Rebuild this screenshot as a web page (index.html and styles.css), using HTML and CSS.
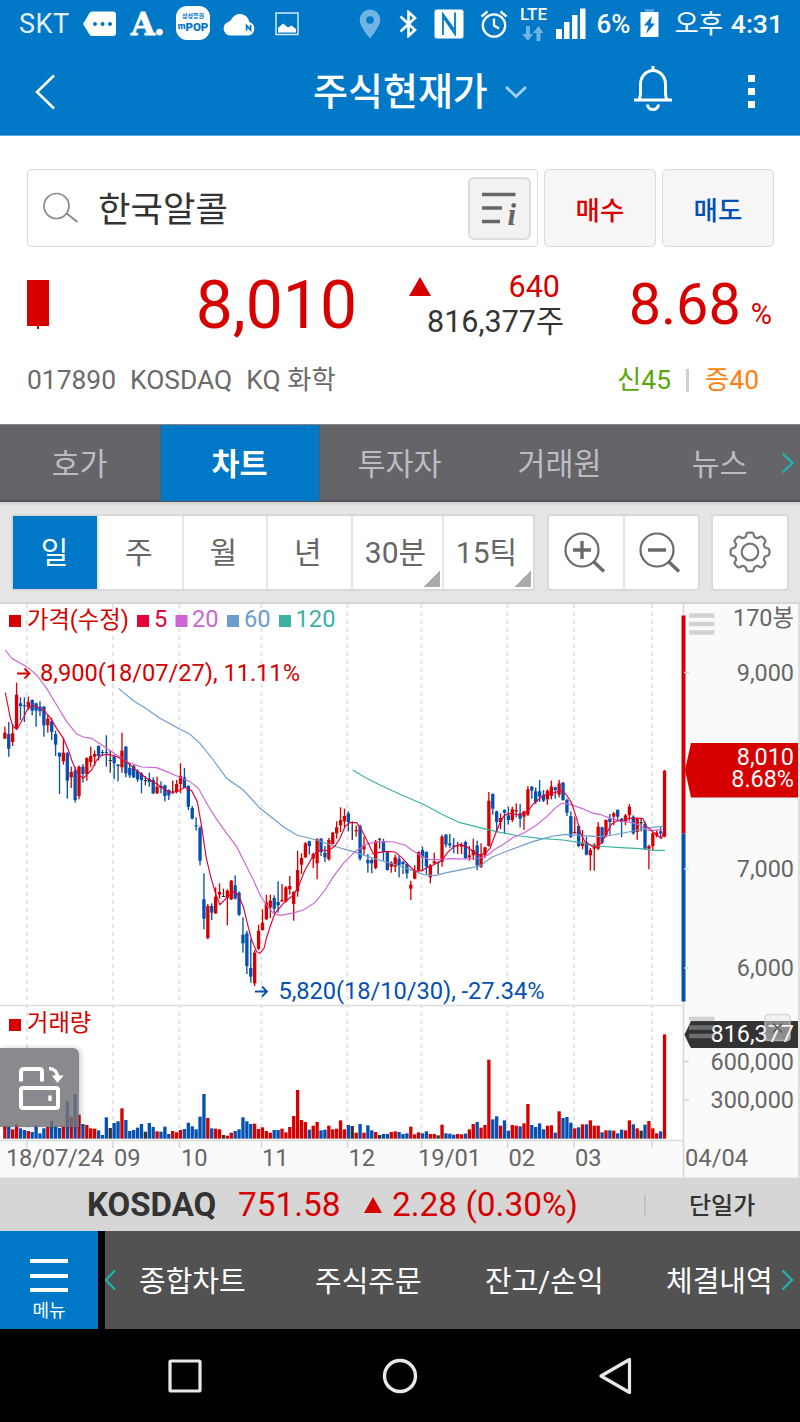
FILE: index.html
```html
<!DOCTYPE html>
<html lang="ko">
<head>
    <meta charset="UTF-8">
    <meta name="viewport" content="width=device-width, initial-scale=1.0">
    <title>주식현재가</title>
    <link rel="stylesheet" href="styles.css">
</head>
<body>
    <!-- 상태바 -->
    <div class="status-bar">
        <div class="status-left">
            <span class="carrier">SKT</span>
            <svg class="ic-msg" width="34" height="26" viewBox="0 0 34 26"><path d="M9 .5H30a3 3 0 0 1 3 3V22a3 3 0 0 1-3 3H9Q7.500 25 6.500 23.500L0 13 6.500 2Q7.500.5 9 .5Z" fill="#fff"/><circle cx="12" cy="13" r="2" fill="#0078c8"/><circle cx="19.500" cy="13" r="2" fill="#0078c8"/><circle cx="27" cy="13" r="2" fill="#0078c8"/></svg>
            <span class="logo-a">A.</span>
            <div class="mpop"><small>삼성증권</small><b><i>m</i>POP</b></div>
            <svg class="ic-cloud" width="34" height="24" viewBox="0 0 34 24"><path d="M7 23.500a7 7 0 0 1-1-13.800 2.500 2.500 0 0 1 2-1.500A9.500 9.500 0 0 1 26.300 10 7 7 0 0 1 26 23.500Z" fill="#fff"/><path d="M23.600 18.500V13.500L27.600 18V13" fill="none" stroke="#0078c8" stroke-width="1.700"/></svg>
            <svg class="ic-pic" width="24" height="24" viewBox="0 0 24 24"><rect x="1" y="1" width="22" height="21.500" fill="none" stroke="#d5e9f7" stroke-width="1.500"/><path d="M3 20.500V16l5-4.500 5 4 3.500-2 4.500 3.500v3.500Z" fill="#fff"/></svg>
        </div>
        <div class="status-right">
            <svg class="ic-pin" width="22" height="30" viewBox="0 0 22 30"><path fill-rule="evenodd" d="M11 .5A10.300 10.300 0 0 0 .7 10.800C.7 18 11 29.500 11 29.500S21.300 18 21.300 10.800A10.300 10.300 0 0 0 11 .5Zm0 6.700a3.800 3.800 0 1 1 0 7.600 3.800 3.800 0 0 1 0-7.600Z" fill="#6fb4e3"/></svg>
            <svg class="ic-bt" width="18" height="28" viewBox="0 0 18 28"><path d="M1.500 6.500 16 20 9.500 26V2L16 8 1.500 21.500" fill="none" stroke="#fff" stroke-width="2.600"/></svg>
            <svg class="ic-nfc" width="30" height="30" viewBox="0 0 30 30"><rect x=".5" y=".5" width="29" height="29" rx="2.500" fill="#fff"/><path d="M9 26V5L20 20.500M21 3.500V25L10 9" fill="none" stroke="#0078c8" stroke-width="1.800"/></svg>
            <svg class="ic-alarm" width="28" height="28" viewBox="0 0 28 28" fill="none" stroke="#fff" stroke-width="2.300"><circle cx="14" cy="15.500" r="11.200"/><path d="M14 8.500V15.500L19 18.500M1.500 6.500 7.500 1.500M26.500 6.500 20.500 1.500"/></svg>
            <div class="lte"><span>LTE</span>
                <svg width="22" height="15" viewBox="0 0 22 15" fill="#6fb4e3"><path d="M4 0H8V8H11L6 15 0 8H4ZM14.500 15H18.500V7H21.500L16.500 0 11 7H14.500Z"/></svg>
            </div>
            <svg class="ic-signal" width="30" height="32" viewBox="0 0 30 32" fill="#fff"><path d="M0 21H6V31H0ZM8 14H13.500V31H8ZM16 7H21.500V31H16ZM24 .5H29.500V31H24Z"/></svg>
            <span class="battery-text">6%</span>
            <svg class="ic-battery" width="19" height="29" viewBox="0 0 19 29"><path d="M5 0H14V3H5Z" fill="#4da1dc"/><path d="M.5 3H18.500V28H.5Z" fill="#fff"/><path d="M12 7 4 16.500H8.500L6 25 15 14.500H10.500Z" fill="#0078c8"/></svg>
            <span class="clock"><span class="thin">오후</span> 4:31</span>
        </div>
    </div>

    <!-- 타이틀 -->
    <div class="header">
        <svg class="back" width="22" height="36" viewBox="0 0 22 36"><path d="M20 1.500 3 18 20 34.500" fill="none" stroke="#fff" stroke-width="2.600"/></svg>
        <div class="title">
            <h1>주식현재가</h1>
            <svg width="22" height="14" viewBox="0 0 22 14"><path d="M1 2 11 11.500 21 2" fill="none" stroke="#a5d0ed" stroke-width="2.800"/></svg>
        </div>
        <svg class="bell" width="40" height="46" viewBox="0 0 40 46" fill="none" stroke="#fff" stroke-width="3"><path d="M20 0V4M1 34H39M6 34Q7.500 31 7.500 27V18.500A12.500 14 0 0 1 32.500 18.500V27Q32.500 31 34 34"/><path d="M14.500 38.500A5.500 5 0 0 0 25.500 38.500"/></svg>
        <div class="more"><i></i><i></i><i></i></div>
    </div>

    <!-- 종목 정보 -->
    <div class="stock">
        <div class="search-row">
            <div class="search-box">
                <svg width="36" height="32" viewBox="0 0 36 32" fill="none" stroke="#888"><circle cx="13.500" cy="14" r="12.500" stroke-width="1.700"/><path d="M23 21 34.500 30" stroke-width="1.800"/></svg>
                <span class="stock-name">한국알콜</span>
                <div class="info-btn">
                    <svg width="36" height="34" viewBox="0 0 36 34" stroke="#666" stroke-width="3.600"><path d="M0 3.500H33.500M0 17H20M0 30.500H18"/></svg>
                    <em>i</em>
                </div>
            </div>
            <button class="buy">매수</button>
            <button class="sell">매도</button>
        </div>
        <div class="price-row">
            <div class="mini-candle"></div>
            <div class="price">8,010</div>
            <div class="change">
                <div class="diff"><i class="up"></i><span>640</span></div>
                <div class="volume">816,377주</div>
            </div>
            <div class="rate">8.68<small>%</small></div>
        </div>
        <div class="meta-row">
            <span>017890</span><span>KOSDAQ</span><span>KQ 화학</span>
            <span class="credit">신45</span><i></i><span class="margin">증40</span>
        </div>
    </div>

    <div class="tabs">
        <div class="tab">호가</div>
        <div class="tab active">차트</div>
        <div class="tab">투자자</div>
        <div class="tab">거래원</div>
        <div class="tab">뉴스</div>
        <svg class="tabs-next" width="14" height="22" viewBox="0 0 14 22"><path d="M1.500 1.500 11.500 11 1.500 20.500" fill="none" stroke="#1cb5b0" stroke-width="2.400"/></svg>
    </div>

    <div class="toolbar">
        <div class="group periods">
            <div class="cell on">일</div>
            <div class="cell">주</div>
            <div class="cell">월</div>
            <div class="cell">년</div>
            <div class="cell drop">30분</div>
            <div class="cell drop">15틱</div>
        </div>
        <div class="group zoom">
            <div class="cell"><svg width="42" height="42" viewBox="0 0 42 42" fill="none" stroke="#6a696d"><circle cx="18" cy="18" r="16.500" stroke-width="2.200"/><path d="M9 18H27M18 9V27M30 30 40 39.500" stroke-width="3.400"/></svg></div>
            <div class="cell"><svg width="42" height="42" viewBox="0 0 42 42" fill="none" stroke="#6a696d"><circle cx="18" cy="18" r="16.500" stroke-width="2.200"/><path d="M9 18H27M30 30 40 39.500" stroke-width="3.400"/></svg></div>
        </div>
        <div class="group setting">
            <div class="cell"><svg width="42" height="42" viewBox="-21 -21 42 42" fill="none" stroke="#77767a" stroke-width="2.200"><circle r="8.300"/><path id="gear" stroke-linejoin="round"/></svg></div>
        </div>
    </div>

    <!-- 차트 -->
    <div class="chart-wrap">
        <svg id="chart" width="800" height="575" viewBox="0 0 800 575">
            <rect width="800" height="575" fill="#fff"/>
            <rect x="683" width="117" height="575" fill="#fafafa"/>
            <rect y="539" width="800" height="36" fill="#fafafa"/>
            <path d="M0 1H800" stroke="#d6d6d6" stroke-width="2"/>
            <path d="M0 403.500H683M0 538.500H683" stroke="#dcdcdc" stroke-width="1.500"/>
            <path d="M683.500 2V575M799 2V575" stroke="#d6d6d6" stroke-width="1.500"/>
            <g id="grid"></g>
            <g id="volumes"></g>
            <g id="candles"></g>
            <g id="lines" fill="none" stroke-width="3.500"></g>

            <g class="legend">
                <rect x="9" y="13" width="12" height="12" fill="#d60000"/><text x="27" y="26" fill="#d60000" class="ko">가격(수정)</text>
                <rect x="137" y="13" width="12" height="12" fill="#e60038"/><text x="154" y="25" fill="#e60038">5</text>
                <rect x="175.500" y="13" width="12" height="12" fill="#cb66d3"/><text x="192" y="25" fill="#cb66d3">20</text>
                <rect x="227" y="13" width="12" height="12" fill="#6b9dd0"/><text x="244" y="25" fill="#6b9dd0">60</text>
                <rect x="279" y="13" width="12" height="12" fill="#3bb3a0"/><text x="295.500" y="25" fill="#3bb3a0">120</text>
                <rect x="9" y="417" width="12" height="12" fill="#d60000"/><text x="27" y="429" fill="#d60000" class="ko">거래량</text>
            </g>
            <path d="M17 71.500H29M24.500 66.500 29.500 71.500 24.500 76.500" fill="none" stroke="#d60000" stroke-width="1.800"/>
            <text x="40" y="79" fill="#d60000" textLength="260">8,900(18/07/27), 11.11%</text>
            <path d="M255 389.500H266M262 384.500 267 389.500 262 394.500" fill="none" stroke="#0550b0" stroke-width="1.800"/>
            <text x="278.500" y="397" fill="#0550b0" textLength="266">5,820(18/10/30), -27.34%</text>

            <!-- 가격 축 -->
            <path d="M683.500 13.500V231.500" stroke="#d60000" stroke-width="4"/>
            <path d="M683.500 231.500V399.500" stroke="#0550b0" stroke-width="4"/>
            <path d="M684 70.500H689M684 267H689M684 366H689M684 459.500H689M684 498H689" stroke="#d6d6d6" stroke-width="1.500"/>
            <path d="M689 13.500H714.500M689 22H714.500M689 30.500H714.500" stroke="#d3d3d3" stroke-width="4.500"/>
            <path d="M685 168 691 141H798V195.500H691Z" fill="#d60000"/>
            <g class="axis">
                <text x="794" y="23.500" class="ko">170봉</text>
                <text x="794" y="78.500">9,000</text>
                <text x="794" y="275">7,000</text>
                <text x="794" y="374">6,000</text>
                <text x="794" y="162.500" class="white">8,010</text>
                <text x="794" y="185" class="white">8.68%</text>
                <text x="794" y="467.500">600,000</text>
                <text x="794" y="505.500">300,000</text>
            </g>
            <path d="M684.500 432.500 691 419H798V446H691Q688 441 684.500 432.500Z" fill="#333"/>
            <text x="794" y="440" class="white end">816,377</text>
            <path d="M689 417H714.500M689 425.500H714.500M689 434H714.500" stroke="#a8a8a8" stroke-opacity=".5" stroke-width="4.500"/>
            <rect x="765" y="412.500" width="25" height="26" rx="3" fill="#e8e8e8" fill-opacity=".5" stroke="#ccc" stroke-opacity=".7" stroke-width="1.500"/>
            <path d="M773 421.500 782 430.500M782 421.500 773 430.500" stroke="#555" stroke-width="1.500"/>

            <g class="dates">
                <text x="6" y="564" textLength="98">18/07/24</text>
                <text x="114" y="564">09</text>
                <text x="181" y="564">10</text>
                <text x="262" y="564">11</text>
                <text x="348.500" y="564">12</text>
                <text x="418" y="564">19/01</text>
                <text x="508.500" y="564">02</text>
                <text x="575" y="564">03</text>
                <text x="685" y="564">04/04</text>
            </g>
        </svg>
        <div class="rotate-btn">
            <svg width="46" height="44" viewBox="0 0 46 44" fill="none" stroke="#fff" stroke-width="4"><path d="M3 15.500V6Q3 3 6 3H22Q24 3 24 6V15.500"/><rect x="3" y="22" width="37" height="20" rx="2"/><path d="M32 29.500V35M31 2.500C36 2.500 39 6 39.500 10" stroke-width="3.400"/><path d="M34 9.500H45.500L39.500 17Z" fill="#fff" stroke="none"/></svg>
        </div>
    </div>

    <div class="index-bar">
        <b>KOSDAQ</b>
        <span class="idx">751.58</span>
        <i class="up"></i>
        <span class="idx-change">2.28 (0.30%)</span>
        <span class="single">단일가</span>
    </div>

    <div class="bottom-nav">
        <div class="menu"><i></i><i></i><i></i><span>메뉴</span></div>
        <div class="links">
            <svg width="14" height="22" viewBox="0 0 14 22"><path d="M10 1.500 .8 11 10 20.500" fill="none" stroke="#1cb5b0" stroke-width="2.200"/></svg>
            <span>종합차트</span>
            <span>주식주문</span>
            <span>잔고/손익</span>
            <span>체결내역</span>
            <svg width="14" height="22" viewBox="0 0 14 22"><path d="M1.500 1.500 11 11 1.500 20.500" fill="none" stroke="#1cb5b0" stroke-width="2.200"/></svg>
        </div>
    </div>

    <div class="android-nav">
        <svg width="36" height="36" viewBox="0 0 36 36"><rect x="3" y="3" width="30" height="30" rx="1" fill="none" stroke="#e8e8e8" stroke-width="3.200"/></svg>
        <svg width="36" height="36" viewBox="0 0 36 36"><circle cx="18" cy="18" r="15.500" fill="none" stroke="#e8e8e8" stroke-width="3.400"/></svg>
        <svg width="36" height="36" viewBox="0 0 36 36"><path d="M32.500 1.500V34.500L4 18Z" fill="none" stroke="#e8e8e8" stroke-width="3.200" stroke-linejoin="round"/></svg>
    </div>

    <script src="chart.js"></script>
</body>
</html>
```
FILE: styles.css
```css
* {
    box-sizing: border-box;
}

body {
    margin: 0;
    width: 800px;
    font-family: Roboto, "Noto Sans CJK KR", sans-serif;
    background: #fff;
    color: #333;
}

svg {
    display: block;
    flex: none;
}

/* 상태바 */
.status-bar {
    display: flex;
    justify-content: space-between;
    height: 48px;
    padding: 0 17px 0 19px;
    background: #0078c8;
    color: #fff;
}

.status-left,
.status-right {
    display: flex;
    align-items: center;
    height: 47px;
}

.carrier {
    width: 64px;
    font-size: 27px;
    letter-spacing: 0.5px;
    color: #e3f0f9;
}

.logo-a {
    width: 45px;
    margin-left: 14px;
    font-family: "DejaVu Serif", serif;
    font-size: 31px;
    font-weight: bold;
    line-height: 46px;
    letter-spacing: -1px;
    -webkit-text-stroke: 0.8px #fff;
}

.mpop {
    width: 34px;
    height: 34px;
    margin-top: -1px;
    padding-top: 6px;
    border-radius: 11px;
    background: #fff;
    color: #0078c8;
    text-align: center;
}

.mpop small {
    display: block;
    font-size: 6px;
    font-weight: bold;
    line-height: 8px;
}

.mpop b {
    display: block;
    font-size: 11.5px;
    font-weight: 900;
    line-height: 12px;
}

.mpop i {
    font-size: 9px;
    font-style: normal;
    vertical-align: 2px;
}

.ic-cloud {
    margin-left: 13px;
}

.ic-pic {
    margin-left: 18px;
}

.ic-bt {
    margin-left: 18px;
}

.ic-nfc {
    margin-left: 17px;
}

.ic-alarm {
    margin-left: 16px;
}

.lte {
    display: flex;
    flex-direction: column;
    align-items: center;
    width: 30px;
    height: 40px;
    margin-left: 10px;
    padding-top: 3px;
}

.lte span {
    font-size: 17px;
    font-weight: 500;
    line-height: 15px;
}

.lte svg {
    margin-top: 4px;
}

.ic-signal {
    margin-left: 8px;
}

.battery-text {
    width: 44px;
    margin-left: 10px;
    font-size: 26px;
    font-weight: 500;
    line-height: 50px;
}

.clock {
    margin-left: 15px;
    font-size: 26.5px;
    font-weight: 500;
    line-height: 50px;
    white-space: nowrap;
}

.thin {
    margin-right: 1px;
    font-weight: 400;
}

/* 타이틀 */
.header {
    display: flex;
    align-items: center;
    height: 88px;
    padding: 0 44px 0 34px;
    border-bottom: 1px solid #5aa9dc;
    background: #0078c8;
}

.title {
    display: flex;
    align-items: center;
    width: 214px;
    margin-left: 257px;
}

.title h1 {
    width: 176px;
    margin: 0;
    font-size: 38px;
    font-weight: 500;
    line-height: 60px;
    color: #fff;
    white-space: nowrap;
}

.title svg {
    margin-left: 16px;
}

.bell {
    margin: -5px 0 0 106px;
}

.more {
    display: flex;
    flex-direction: column;
    gap: 6px;
    margin-left: auto;
    margin-right: 1px;
}

.more i {
    width: 7px;
    height: 7px;
    background: #fff;
}

/* 종목 정보 */
.stock {
    height: 288px;
    padding: 33px 26px 0 27px;
}

.search-row {
    display: flex;
    gap: 6px;
    height: 78px;
}

.search-box {
    display: flex;
    align-items: center;
    width: 511px;
    padding: 0 6px 0 15px;
    border: 1.5px solid #d9d9d9;
    border-radius: 4px;
}

.stock-name {
    margin-left: 19px;
    padding-top: 4px;
    font-size: 35.3px;
    line-height: 60px;
}

.info-btn {
    position: relative;
    display: flex;
    align-items: center;
    width: 63px;
    height: 63px;
    margin-left: auto;
    padding-left: 12px;
    border: 2px solid #dcdcdc;
    border-radius: 6px;
    background: #f2f2f2;
}

.info-btn em {
    position: absolute;
    right: 13px;
    bottom: 8px;
    font-family: "Liberation Serif", serif;
    font-size: 31px;
    font-weight: bold;
    line-height: 30px;
    color: #666;
}

.search-row button {
    width: 112px;
    padding: 0;
    border: 1.5px solid #dadada;
    border-radius: 5px;
    background: #f6f6f6;
    font-family: inherit;
    font-size: 26.5px;
    font-weight: 500;
}

.search-row .buy {
    color: #d90000;
}

.search-row .sell {
    color: #0550b0;
}

.price-row {
    display: grid;
    grid-template-columns: 22px 308px 207px 1fr;
    height: 96px;
    color: #d60000;
}

.mini-candle {
    height: 46px;
    margin-top: 33px;
    background: #d60000;
}

.mini-candle::after {
    content: "";
    display: block;
    width: 2px;
    height: 49px;
    margin-left: 10px;
    background: #d60000;
}

.price {
    padding-top: 1px;
    font-size: 66px;
    line-height: 116px;
    text-align: right;
}

.change {
    padding-top: 22px;
}

.diff {
    display: flex;
    align-items: center;
    justify-content: space-between;
    height: 35px;
    padding: 0 4px 0 52px;
    font-size: 30.5px;
}

.up {
    width: 0;
    height: 0;
    border: 11px solid transparent;
    border-top: 0;
    border-bottom: 19px solid #d60000;
}

.volume {
    font-size: 30.5px;
    line-height: 36px;
    text-align: right;
    color: #333;
}

.rate {
    padding-right: 2px;
    font-size: 57.5px;
    line-height: 116px;
    text-align: right;
    white-space: nowrap;
}

.rate small {
    margin-left: 10px;
    font-size: 29px;
}

.meta-row {
    display: flex;
    align-items: center;
    height: 74px;
    padding-right: 15px;
    font-size: 26.4px;
    line-height: 74px;
    color: #6a6a6a;
}

.meta-row span + span {
    margin-left: 14px;
}

.meta-row i {
    width: 3px;
    height: 23px;
    margin: 0 16px 0 15px;
    background: #d0d0d0;
}

.meta-row .credit {
    margin-left: auto;
    color: #5aa50a;
}

.meta-row .margin {
    color: #ff7f0e;
}

/* 탭 */
.tabs {
    position: relative;
    display: flex;
    height: 78px;
    border-top: 1px solid #858589;
    border-bottom: 2px solid #55545a;
    background: #656468;
}

.tab {
    width: 160px;
    height: 76px;
    padding-right: 1px;
    font-size: 30.5px;
    line-height: 80px;
    text-align: center;
    color: #bdbdc1;
}

.tab.active {
    border: solid #4c5f72;
    border-width: 0 1px;
    background: #0078c8;
    color: #fff;
    font-weight: 700;
}

.tabs-next {
    position: absolute;
    top: 27px;
    right: 5px;
}

/* 차트 툴바 */
.toolbar {
    display: flex;
    height: 100px;
    padding: 12px 11px 0;
    background: linear-gradient(#cfcfcf, #e5e5e5 4px);
}

.group {
    display: flex;
    height: 77px;
    border: 2px solid #d9d9d9;
    border-radius: 4px;
    background: #fff;
}

.cell {
    display: flex;
    align-items: center;
    justify-content: center;
    flex: none;
    width: 84.5px;
    height: 73px;
    padding-right: 3px;
    border-left: 2px solid #e5e5e5;
    font-size: 30px;
    line-height: 75px;
    color: #666;
}

.cell:first-child {
    border-left: 0;
}

.cell.on {
    width: 84px;
    padding-right: 1px;
    background: #0078c8;
    color: #fff;
}

.periods {
    width: 524px;
}

.drop {
    position: relative;
    width: 91px;
}

.drop::after {
    content: "";
    position: absolute;
    right: 2px;
    bottom: 2px;
    width: 16px;
    height: 16px;
    background: linear-gradient(135deg, transparent 50%, #aaa 50%);
}

.zoom {
    width: 153px;
    margin-left: 12px;
}

.zoom .cell {
    width: 75px;
}

.zoom .cell:first-child {
    width: 74px;
}

.setting {
    width: 78px;
    margin-left: 11px;
}

.setting .cell {
    width: 74px;
    padding: 0 0 1px;
}

/* 차트 */
.chart-wrap {
    position: relative;
    height: 575px;
}

#chart text {
    font-size: 23.7px;
}

#chart text.ko {
    font-size: 23.3px;
}

.axis text,
.end {
    text-anchor: end;
    fill: #666;
}

#chart .axis text,
#chart .end {
    font-size: 23.4px;
}

.dates text {
    fill: #666;
}

#chart .white {
    fill: #fff;
}

.rotate-btn {
    position: absolute;
    left: 0;
    top: 446px;
    width: 79px;
    height: 79px;
    padding: 18px 0 0 18px;
    border-radius: 0 6px 0 0;
    background: rgba(115, 114, 120, 0.84);
    box-shadow: 2px 0 5px rgba(0, 0, 0, 0.2);
}

/* 지수 바 */
.index-bar {
    display: flex;
    align-items: center;
    height: 54px;
    padding-left: 87px;
    border-top: 1px solid #e8e8e8;
    background: #d6d6d6;
    font-size: 33.4px;
    line-height: 54px;
    color: #d60000;
    white-space: nowrap;
}

.index-bar b {
    width: 151px;
    font-weight: 700;
    font-size: 33px;
    color: #333;
}

.idx {
    width: 126px;
}

.index-bar .up {
    border-width: 0 9px 16px;
}

.idx-change {
    width: 254px;
    height: 22px;
    margin-left: 10px;
    border-right: 2px solid #c3c3c3;
    line-height: 22px;
}

.single {
    margin-left: 43px;
    padding-top: 2px;
    font-size: 24px;
    font-weight: 500;
    color: #333;
}

/* 하단 메뉴 */
.bottom-nav {
    display: flex;
    height: 98px;
    background: #000;
}

.menu {
    display: flex;
    flex-direction: column;
    align-items: center;
    width: 98px;
    padding-top: 28px;
    background: #0078c8;
    color: #fff;
}

.menu i {
    width: 38px;
    height: 4px;
    margin-bottom: 10.5px;
    background: #fff;
}

.menu span {
    padding-top: 1px;
    font-size: 18px;
    line-height: 14px;
}

.links {
    display: flex;
    align-items: center;
    flex: 1;
    margin-left: 7px;
    padding-right: 5px;
    background: #525252;
    color: #fff;
    font-size: 29px;
    line-height: 98px;
    white-space: nowrap;
}

.links span {
    padding-top: 3px;
}

.links span:nth-of-type(1) {
    width: 176px;
    margin-left: 20px;
}

.links span:nth-of-type(2) {
    width: 170px;
}

.links span:nth-of-type(3) {
    width: 181px;
}

.links svg:last-child {
    margin-left: auto;
}

.android-nav {
    display: flex;
    justify-content: center;
    gap: 179px;
    align-items: center;
    height: 93px;
    background: #000;
}
```
FILE: chart.js
```js
// 좌표 단위는 1/3 픽셀, 봉 간격 11.7
const SVG = 'http://www.w3.org/2000/svg';
const colors = { r: '#d60000', b: '#0550b0', k: '#333' };
const gridX = [27, 113, 179.5, 261.5, 347.5, 421.5, 507.5, 574, 652];

// 색, 고가, 저가, 몸통 위, 몸통 아래
const candles = `
r380,416,398,416 b366,470,402,446 r372,438,400,426 r248,390,284,386 b292,360,310,318 b292,366,316,319
r290,330,306,322 b298,346,300,332 b308,380,310,332 b304,348,320,334 b318,410,320,376 r344,398,356,376
b354,420,364,396 b392,468,402,434 b458,582,458,470 r414,494,458,484 b456,596,460,542 r500,564,516,532
b500,608,512,600 r496,598,500,588 b492,548,500,522 r472,542,474,522 r440,502,468,486 r452,498,462,470
b436,482,438,468 b450,468,456,458 b406,500,456,458 k450,518,480,482 b464,538,470,490 b492,544,494,498
r398,518,452,502 b438,532,440,520 b488,534,504,526 b494,534,498,532 b508,546,512,538 b516,580,520,540
k528,556,540,543 b518,560,536,546 b532,582,540,580 r530,582,560,580 b544,580,558,564 b554,604,556,588
b568,600,570,586 r542,582,574,578 r540,580,552,576 r490,580,528,552 b504,564,532,564 b556,630,558,620
b618,658,624,656 b652,692,676,679 b678,796,684,782 b820,988,898,956 r912,1018,918,1014 b910,960,918,938
r862,942,890,940 r850,896,876,884 k866,890,888,890 r868,976,872,894 r840,900,842,898 b826,898,856,896
b874,948,878,944 b952,1058,1004,1030 b992,1122,1000,1098 b1016,1148,1104,1130 r1050,1158,1058,1150 r974,1050,992,1046
r928,992,968,990 r884,960,908,958 r884,954,902,922 b886,938,894,926 b844,938,906,916 r852,906,900,904
r858,908,862,904 r828,884,858,868 r874,962,876,912 r752,890,810,874 r760,822,774,794 r726,774,730,772
b722,764,724,738 r758,804,762,776 r714,838,718,790 b714,768,716,756 b738,786,758,772 r714,782,720,778
r696,734,698,732 r664,716,682,700 r622,696,660,676 r626,682,648,664 b634,694,640,666 k664,720,666,668
r676,710,690,694 b674,782,678,776 r710,764,736,748 b762,818,780,790 b776,820,780,790 r720,808,724,804
k714,746,716,718 b716,782,726,756 b754,812,756,810 r784,818,788,800 r764,816,772,800 b768,832,776,796
b782,822,786,792 b788,836,792,820 r842,900,854,866 r796,838,812,836 r754,814,756,812 b740,814,750,772
b754,824,756,800 r792,850,796,832 r758,794,784,790 k784,822,786,788 r704,800,710,786 b702,742,704,734
b702,744,730,736 b714,760,736,740 r726,762,736,738 r728,762,735,740 b722,778,726,774 r738,782,766,772
r716,780,750,766 b722,810,736,796 r730,804,764,800 r740,774,742,766 r576,740,602,738 b580,644,582,626
b632,696,634,666 r640,688,654,666 b628,700,630,638 b620,674,646,660 r620,666,628,660 r610,652,630,634
b612,682,640,656 r632,690,634,650 r558,648,568,644 b558,596,560,572 b562,612,574,606 b540,606,574,590
b570,606,584,602 r568,614,572,598 r542,598,560,588 b560,596,562,570 r540,592,550,584 b546,602,548,600
b596,648,600,638 b634,714,648,710 r650,700,696,700 b674,742,678,738 r690,748,728,738 b710,766,726,764
r744,812,750,766 r730,812,734,746 r666,750,680,746 b680,732,682,728 r658,712,660,706 b642,704,656,666
r636,676,640,650 b628,664,630,650 b654,712,656,666 r642,676,646,666 r612,662,620,646 b646,704,650,700
r652,720,656,696 k656,694,666,670 b664,750,672,746 r734,808,738,746 r696,752,700,738 r690,712,698,706
b682,716,694,700 r510,712,512,710`.trim().split(/\s+/).map(s => [s[0], ...s.slice(1).split(',').map(Number)]);

// 거래량 막대 윗변
const volumes = [
    378, 380, 388, 373, 385, 390, 393, 396, 376, 400, 385, 381, 362, 378, 384, 378, 304, 350, 282, 344,
    372, 375, 385, 386, 391, 405, 352, 384, 369, 364, 325, 360, 393, 390, 383, 372, 395, 369, 381, 394,
    395, 380, 402, 393, 397, 390, 387, 368, 379, 388, 350, 282, 354, 385, 386, 388, 405, 407, 398, 393,
    388, 352, 364, 372, 371, 387, 382, 393, 398, 390, 390, 386, 397, 381, 348, 270, 360, 366, 389, 377,
    366, 391, 389, 377, 388, 386, 361, 388, 375, 378, 398, 372, 398, 376, 391, 396, 405, 402, 402, 396,
    394, 396, 402, 400, 380, 403, 397, 400, 394, 402, 402, 406, 374, 400, 401, 404, 402, 403, 401, 388,
    372, 366, 383, 375, 179, 358, 349, 377, 361, 392, 375, 377, 379, 370, 312, 375, 381, 370, 388, 377,
    376, 398, 334, 354, 351, 368, 385, 382, 373, 373, 361, 377, 377, 397, 391, 391, 392, 400, 389, 391,
    361, 373, 385, 392, 374, 363, 385, 400, 394, 103
];

// 이동평균선
const averages = [
    ['#3bb3a0', '1058,510 1100,535 1140,555 1200,583 1270,613 1330,645 1380,668 1440,683 1500,697 1560,708 1620,715 1690,720 1740,728 1790,738 1850,742 1920,746 1960,751 1995,751'],
    ['#6b9dd0', '356,265 400,302 430,320 480,355 540,388 570,403 600,430 640,480 680,535 730,570 780,625 810,648 850,680 890,705 950,720 1000,738 1060,755 1120,775 1180,792 1240,812 1270,824 1305,827 1340,818 1400,806 1440,798 1475,772 1530,750 1600,724 1660,708 1700,703 1750,707 1800,710 1840,705 1900,693 1950,683 1990,679'],
    ['#cb66d3', '16,150 35,175 80,200 110,225 140,265 170,315 200,365 230,402 250,411 275,415 310,438 345,462 385,488 425,501 470,503 500,515 540,532 570,545 595,565 625,618 650,658 680,700 710,740 735,790 760,840 780,885 800,915 820,940 840,946 875,940 910,930 945,908 975,870 1000,830 1030,790 1065,755 1100,732 1140,724 1180,726 1215,735 1235,750 1260,765 1285,778 1320,779 1350,776 1400,777 1440,774 1465,765 1485,748 1515,730 1540,712 1570,700 1610,675 1640,650 1665,625 1685,609 1710,613 1745,625 1780,640 1800,643 1830,655 1870,664 1895,668 1920,675 1940,690 1955,692 1985,688'],
    ['#e60038', '16,278 24,318 30,350 38,378 50,388 60,372 72,350 82,328 100,316 130,330 150,352 170,385 190,415 205,450 215,480 225,505 237,525 250,535 262,522 275,510 290,480 305,465 325,463 345,468 360,475 380,486 400,503 420,520 440,535 465,548 485,562 505,576 530,576 555,562 575,572 592,605 605,680 618,770 632,830 648,885 660,914 678,895 700,875 715,885 730,920 742,970 755,1020 770,1055 780,1060 792,1045 800,1012 812,975 825,940 850,910 880,885 895,860 915,810 935,775 950,755 965,750 985,752 1005,738 1020,715 1035,680 1050,668 1070,668 1085,690 1105,730 1120,762 1135,758 1160,754 1185,756 1205,772 1225,795 1245,814 1265,812 1280,803 1300,795 1325,782 1345,755 1360,742 1380,733 1400,740 1420,755 1435,765 1455,760 1470,745 1485,705 1500,668 1512,648 1525,640 1560,645 1585,632 1600,612 1620,595 1640,582 1665,578 1685,571 1700,585 1715,610 1730,655 1742,700 1755,725 1775,738 1790,741 1805,728 1820,700 1835,672 1850,663 1870,660 1890,655 1928,655 1940,680 1955,692 1970,705 1985,715 1992,690']
];

function add(parent, name, attrs) {
    const el = document.createElementNS(SVG, name);
    for (const key in attrs) el.setAttribute(key, attrs[key]);
    parent.appendChild(el);
    return el;
}

const grid = document.getElementById('grid');
gridX.forEach(x => {
    add(grid, 'path', { d: `M${x} 2V538`, stroke: '#e4e4e4', 'stroke-width': 2, 'stroke-dasharray': '4 4' });
    add(grid, 'path', { d: `M${x} 539V546`, stroke: '#d6d6d6', 'stroke-width': 1.5 });
});

const candleGroup = document.getElementById('candles');
const volumeGroup = document.getElementById('volumes');
const lineGroup = document.getElementById('lines');
candleGroup.setAttribute('transform', 'translate(0 -2) scale(.33333)');
lineGroup.setAttribute('transform', 'translate(0 -2) scale(.33333)');
volumeGroup.setAttribute('transform', 'translate(0 398) scale(.33333)');

candles.forEach(([c, high, low, top, bottom], i) => {
    const x = 14.6 + i * 11.71;
    const fill = colors[c];
    add(candleGroup, 'rect', { x: x - 2, y: high, width: 4, height: low - high, fill });
    add(candleGroup, 'rect', { x: x - 5, y: top, width: 10, height: Math.max(bottom - top, 3), fill });
    add(volumeGroup, 'rect', { x: x - 5, y: volumes[i], width: 10, height: 416 - volumes[i], fill });
});

averages.forEach(([stroke, points]) => add(lineGroup, 'polyline', { points, stroke }));

// 설정 아이콘 톱니
let gear = '';
for (let deg = 0; deg < 360; deg += 3) {
    const a = deg * Math.PI / 180;
    const r = 17.4 + 2 * Math.tanh(2.5 * Math.cos(8 * a) + 0.5);
    gear += `${deg ? 'L' : 'M'}${(r * Math.sin(a)).toFixed(1)} ${(-r * Math.cos(a)).toFixed(1)}`;
}
document.getElementById('gear').setAttribute('d', gear + 'Z');
```
